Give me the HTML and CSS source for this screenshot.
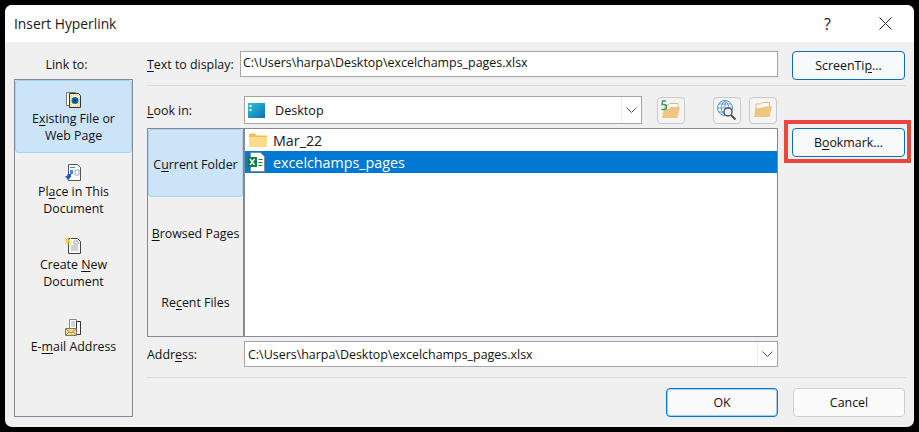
FILE: index.html
```html
<!DOCTYPE html>
<html lang="en">
<head>
<meta charset="utf-8">
<title>Insert Hyperlink</title>
<link rel="stylesheet" href="styles.css">
</head>
<body>
<div class="dialog">
  <header class="titlebar">
    <span class="title">Insert Hyperlink</span>
    <span class="help">?</span>
    <svg class="close" width="13" height="13" viewBox="0 0 13 13"><path d="M.5.5l12 12M12.5.5l-12 12" stroke="#222" fill="none"/></svg>
  </header>
  <div class="content">
    <aside class="linkcol">
      <div class="linkto">Link to:</div>
      <nav class="linkpanel">
        <div class="linkitem active">
          <svg class="licon" width="17" height="17" viewBox="0 0 17 17"><path d="M1.500 1.500h9v13h-9z" fill="#fff" stroke="#777"/><path d="M4.500 2.500h9l2 2v12h-11z" fill="#fdf6c8" stroke="#333"/><path d="M6 4h8v11H6z" fill="none" stroke="#e8c020" stroke-dasharray="1 1"/><circle cx="10" cy="9.500" r="3.500" fill="#0a6fb8"/><path d="M8 7.500l4 4M12 7.500l-4 4" stroke="#0b2a3a"/></svg>
          <span>E<u>x</u>isting File or<br>Web Page</span>
        </div>
        <div class="linkitem">
          <svg class="licon" width="17" height="17" viewBox="0 0 17 17"><path d="M3.500.5h9l3 3v13h-12z" fill="#fff" stroke="#555"/><path d="M5 3h5v1H5zM5 6h3v4H5z" fill="#4a86d8"/><path d="M10 6h4v5h-4z" fill="none" stroke="#9ab"/><path d="M4 7v3h3l-1 .5 0 2.500-3 3-3-4 2 0z" fill="#1c5fc4"/></svg>
          <span>Pl<u>a</u>ce in This<br>Document</span>
        </div>
        <div class="linkitem">
          <svg class="licon" width="17" height="17" viewBox="0 0 17 17"><path d="M3.500 1.500h9l3 3v12h-12z" fill="#f6f6f6" stroke="#444"/><path d="M6 9h7M6 11h7M6 13h7M9 4h4v3H9z" stroke="#aaa" fill="none"/><path d="M0 1l6 6M6 1L0 7M3 0v8M0 4h6" stroke="#f2c81e"/></svg>
          <span>Create <u>N</u>ew<br>Document</span>
        </div>
        <div class="linkitem mail">
          <svg class="licon" width="17" height="17" viewBox="0 0 17 17"><path d="M4.500.5h7v10h-7z" fill="#fff" stroke="#888"/><path d="M6 3h4M6 5h4M6 7h4" stroke="#aaa"/><path d="M11.500 2.500h4v13h-4z" fill="#fff" stroke="#333"/><path d="M.5 9.500h11v7H.5z" fill="#f5dc82" stroke="#777"/><path d="M1 10l5 4 5-4M1 16l3-3M11 16l-3-3" stroke="#b08a20" fill="none"/></svg>
          <span>E-<u>m</u>ail Address</span>
        </div>
      </nav>
    </aside>
    <main class="main">
      <div class="row display-row">
        <label class="lbl lbl-display"><u>T</u>ext to display:</label>
        <div class="field field-display">C:\Users\harpa\Desktop\excelchamps_pages.xlsx</div>
        <button class="btn btn-side">ScreenTi<u>p</u>...</button>
      </div>
      <div class="sep sep-top"></div>
      <div class="row lookin-row">
        <label class="lbl lbl-wide"><u>L</u>ook in:</label>
        <div class="combo combo-look">
          <svg class="desk" width="17" height="15" viewBox="0 0 17 15"><defs><linearGradient id="dg" x1="0" y1="0" x2="1" y2="1"><stop offset="0" stop-color="#2ec4d6"/><stop offset="1" stop-color="#0f6fb8"/></linearGradient></defs><rect width="17" height="15" fill="url(#dg)"/><rect x="1.500" y="2" width="2" height="2" fill="#fff"/><rect x="1.500" y="6" width="2" height="2" fill="#dff"/></svg>
          <span class="combo-text">Desktop</span>
          <span class="drop drop-look"><svg width="11" height="6" viewBox="0 0 11 6"><path d="M.5.5l5 5 5-5" fill="none" stroke="#555"/></svg></span>
        </div>
        <button class="tool tool-up"><svg width="22" height="20" viewBox="0 0 22 20"><path d="M2 18l2-9h5l1.500-2H20l-2.500 11z" fill="#eec680"/><path d="M5 9V5h3M8 5l1.500-1.500H18V7" fill="#fff" stroke="#e0b870"/><path d="M6 1H2.500l-.5 3.500h2a2.500 2.500 0 0 1 0 5H1.500" fill="none" stroke="#3f9c6c" stroke-width="1.500"/></svg></button>
        <button class="tool tool-web"><svg width="22" height="22" viewBox="0 0 22 22"><circle cx="9" cy="9" r="7.500" fill="#f4f8fc" stroke="#4f8cc8"/><path d="M1.500 9h15M9 1.500v15M3 5h12M3 13h12M9 1.500c-5 4-5 11 0 15M9 1.500c5 4 5 11 0 15" fill="none" stroke="#4f8cc8" stroke-width=".8"/><circle cx="12" cy="13" r="4" fill="#eef" stroke="#555" stroke-width="1.400"/><path d="M15 16l4.500 4.500" stroke="#555" stroke-width="2.200"/></svg></button>
        <button class="tool tool-folder"><svg width="20" height="18" viewBox="0 0 20 18"><path d="M1 16l1.500-9h6l2-2H19l-2.500 11z" fill="#eec680"/><path d="M3 7V3h5l1.500-1.500h7V5" fill="#fff" stroke="#e0b870"/></svg></button>
      </div>
      <div class="row browser-row">
        <div class="browser">
          <div class="places">
            <div class="place current">C<u>u</u>rrent Folder</div>
            <div class="place"><u>B</u>rowsed Pages</div>
            <div class="place">Re<u>c</u>ent Files</div>
          </div>
          <ul class="files">
            <li class="file"><svg class="ficon folder" width="18" height="14" viewBox="0 0 18 14"><path d="M0 1.500l1-1h5l2 2h10V14H0z" fill="#f0c050"/><path d="M0 4h18v10H0z" fill="#fbdc8c"/></svg>Mar_22</li>
            <li class="file selected"><svg class="ficon xl" width="20" height="20" viewBox="0 0 20 20"><path d="M4.500.5h10l4 4v15h-14z" fill="#fff" stroke="#8a8a8a"/><rect x="2" y="5" width="9" height="10" fill="#107c41"/><path d="M4 7l4.500 6M8.500 7L4 13" stroke="#fff" stroke-width="1.400"/><path d="M12.500 7h4v1h-4zM12.500 10h4v1h-4zM12.500 13h4v1h-4z" fill="#107c41"/></svg>excelchamps_pages</li>
          </ul>
        </div>
        <div class="bookmark-wrap">
          <button class="btn btn-side btn-book">B<u>o</u>okmark...</button>
          <span class="annot"></span>
        </div>
      </div>
      <div class="row address-row">
        <label class="lbl lbl-wide">Addr<u>e</u>ss:</label>
        <div class="combo combo-addr">
          <span class="addr-text">C:\Users\harpa\Desktop\excelchamps_pages.xlsx</span>
          <span class="drop"><svg width="11" height="6" viewBox="0 0 11 6"><path d="M.5.5l5 5 5-5" fill="none" stroke="#555"/></svg></span>
        </div>
      </div>
      <div class="sep sep-bottom"></div>
      <footer class="footer">
        <button class="btn btn-foot btn-ok">OK</button>
        <button class="btn btn-foot btn-cancel">Cancel</button>
      </footer>
    </main>
  </div>
</div>
</body>
</html>
```
FILE: styles.css
```css
* { box-sizing: border-box; }
html, body { margin: 0; padding: 0; }
body {
  width: 919px;
  height: 432px;
  background: #000;
  padding: 5px;
  font-family: "Open Sans", "Noto Sans", sans-serif;
  font-size: 12.4px;
  color: #111;
  overflow: hidden;
}
u { text-underline-offset: 2px; }
.dialog {
  width: 909px;
  height: 422px;
  background: #f0f0f0;
  border-radius: 7px;
  overflow: hidden;
}
.titlebar {
  height: 37px;
  background: #fff;
  display: flex;
  align-items: center;
  padding: 0 0 0 9px;
}
.title { font-size: 13.8px; flex: 1; color: #1a1a1a; }
.help { font-size: 16px; margin-right: 48px; color: #222; }
.close { margin-right: 22px; }
.content { display: flex; padding: 0 0 0 9px; }
.linkcol { width: 119px; }
.linkto { height: 37px; padding: 14px 14px 0 0; text-align: center; line-height: 17px; }
.linkpanel {
  height: 338px;
  border: 1px solid #858a91;
  display: flex;
  flex-direction: column;
}
.linkitem {
  height: 73px;
  padding-top: 11px;
  text-align: center;
  line-height: 17px;
  flex: none;
  display: flex;
  flex-direction: column;
  align-items: center;
}
.linkitem.active { background: #cce4f7; border: 1px solid #a8d2f2; border-radius: 3px; padding-top: 10px; }
.linkitem.mail { margin-top: 9px; }
.licon { margin-bottom: 2px; display: block; flex: none; }
.main { width: 759px; margin-left: 14px; padding-top: 9px; }
.row { display: flex; align-items: center; }
.display-row { height: 29px; align-items: flex-start; }
.lbl { line-height: 17px; }
.lbl-display { width: 93px; padding-top: 5px; }
.lbl-wide { width: 97px; }
.field {
  width: 538px;
  height: 26px;
  background: #fff;
  border: 1px solid #a5a5a5;
  line-height: 22px;
  padding-left: 2px;
  font-size: 12.45px;
}
.btn {
  font: inherit;
  color: #111;
  background: #f7fafd;
  border: 1px solid #0f6cbd;
  border-radius: 4px;
  padding: 0;
  height: 29px;
}
.btn-side { width: 113px; margin-left: 14px; }
.btn-book { margin-left: 0; display: block; }
.sep { height: 1px; background: #dcdcdc; }
.sep-top { margin: 5px 0 10px; }
.sep-bottom { margin: 10px 0 10px; }
.lookin-row { height: 28px; }
.combo {
  height: 100%;
  background: #fff;
  border: 1px solid #a5a5a5;
  display: flex;
  align-items: center;
  position: relative;
}
.combo-look { width: 398px; height: 28px; padding-left: 3px; }
.desk { flex: none; }
.combo-text { margin-left: 10px; flex: 1; font-size: 12.6px; }
.drop {
  width: 20px;
  height: 100%;
  display: flex;
  align-items: center;
  justify-content: center;
  flex: none;
  border-left: 1px solid #ececec;
  background: #fff;
}
.tool {
  width: 28px;
  height: 27px;
  border: 1px solid #c8c8c8;
  border-radius: 4px;
  background: #f4f4f4;
  padding: 0;
  display: flex;
  align-items: center;
  justify-content: center;
}
.tool-up { margin-left: 15px; }
.tool-web { margin-left: 28px; }
.tool-folder { margin-left: 8px; }
.browser-row { margin-top: 4px; align-items: flex-start; }
.browser { width: 631px; height: 209px; display: flex; border: 1px solid #858a91; }
.places {
  width: 97px;
  flex: none;
  display: flex;
  flex-direction: column;
  border-right: 2px solid #858a91;
}
.place {
  flex: 1;
  display: flex;
  align-items: center;
  justify-content: center;
  white-space: nowrap;
  padding-top: 1px;
}
.place.current { background: #cce4f7; border: 1px solid #a8d2f2; border-radius: 3px; flex: none; height: 68px; margin-bottom: 1px; padding-top: 3px; }
.files { flex: 1; margin: 0; padding: 0; list-style: none; background: #fff; }
.file {
  height: 22px;
  display: flex;
  align-items: center;
  font-size: 14.3px;
  padding-left: 28px;
  position: relative;
  color: #1a1a1a;
}
.file.selected { background: #0078d4; color: #fff; }
.ficon { position: absolute; }
.folder { left: 4px; top: 4px; }
.xl { left: 1px; top: 1px; }
.bookmark-wrap { position: relative; width: 113px; margin-left: 14px; }
.annot {
  position: absolute;
  top: -8px;
  left: -8px;
  right: -6px;
  bottom: -6px;
  border: 4px solid #e9463d;
  pointer-events: none;
}
.address-row { height: 26px; margin-top: 4px; }
.combo-addr { width: 534px; height: 26px; padding-left: 3px; }
.addr-text { flex: 1; font-size: 12.45px; }
.footer { display: flex; justify-content: flex-end; gap: 15px; padding-right: 1px; }
.btn-foot { width: 112px; }
.btn-ok { background: #fbfbfb; border: 1px solid #0078d4; box-shadow: inset 0 0 0 1px rgba(0, 120, 212, .35); }
.btn-cancel { background: #fbfbfb; border-color: #cfcfcf; }
```
